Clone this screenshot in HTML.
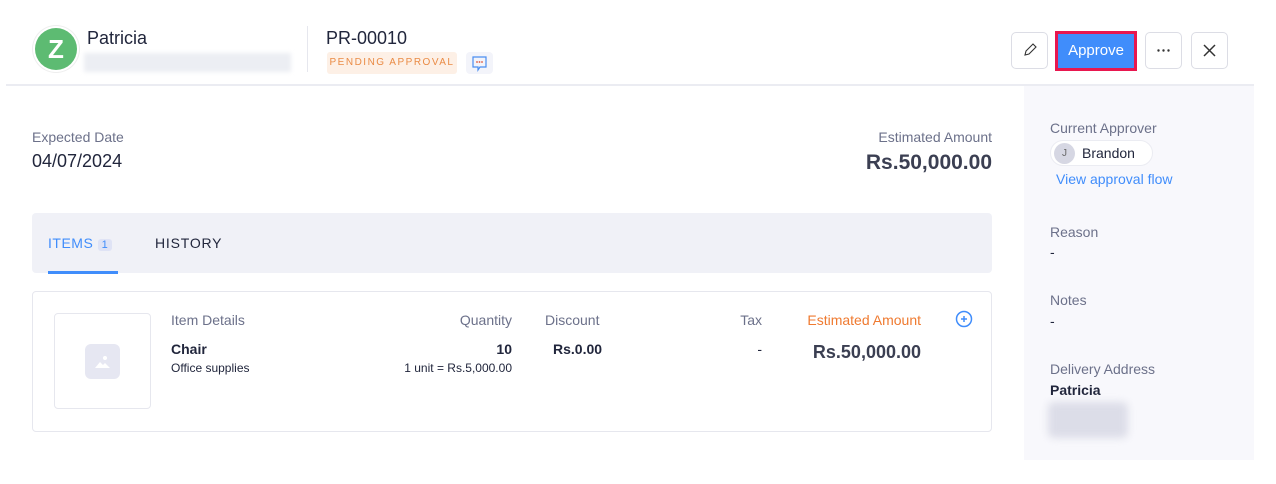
<!DOCTYPE html>
<html><head><style>
*{margin:0;padding:0;box-sizing:border-box}
body{width:1276px;height:484px;background:#fff;font-family:"Liberation Sans",sans-serif;color:#21263c;position:relative;overflow:hidden}
.a{position:absolute;white-space:nowrap}
.lbl{color:#6c718a;font-size:14px}
.btn{position:absolute;top:32px;width:37px;height:37px;border:1px solid #dcdde5;border-radius:5px;background:#fff}
</style></head><body>
<div class="a" style="left:33px;top:26px;width:46px;height:46px;border-radius:50%;background:#fff;box-shadow:0 0 0 1px #eee"></div>
<div class="a" style="left:35px;top:28px;width:42px;height:42px;border-radius:50%;background:#5dbb72;color:#fff;font-size:26px;font-weight:bold;text-align:center;line-height:42px">Z</div>
<div class="a" style="left:87px;top:28px;font-size:18px">Patricia</div>
<div class="a" style="left:84px;top:53px;width:207px;height:19px;background:#eceef3;filter:blur(2px)"></div>
<div class="a" style="left:307px;top:26px;width:1px;height:46px;background:#e6e7ee"></div>
<div class="a" style="left:326px;top:28px;font-size:18px">PR-00010</div>
<div class="a" style="left:327px;top:52px;width:130px;height:22px;background:#fdf0e6;border-radius:3px;color:#ea8b45;font-size:10px;letter-spacing:1.5px;text-align:center;line-height:22px">PENDING APPROVAL</div>
<div class="a" style="left:466px;top:52px;width:27px;height:22px;background:#f3f4fa;border-radius:4px"><svg width="27" height="22" viewBox="0 0 27 22"><path d="M7 5h13v10h-6l-2 3v-3H7z" fill="none" stroke="#4a8ef0" stroke-width="1.2"/><circle cx="11" cy="10" r=".9" fill="#e0553a"/><circle cx="13.5" cy="10" r=".9" fill="#e0553a"/><circle cx="16" cy="10" r=".9" fill="#e0553a"/></svg></div>
<div class="btn" style="left:1011px"><svg width="35" height="35"><path d="M13 22l1-4 7-7 3 3-7 7z" fill="none" stroke="#333" stroke-width="1.1"/></svg></div>
<div class="a" style="left:1055px;top:31px;width:82px;height:40px;background:#e8174f;padding:3px"><div style="width:100%;height:100%;background:#408dfb;color:#fff;font-size:15px;text-align:center;line-height:34px">Approve</div></div>
<div class="btn" style="left:1145px"><svg width="35" height="35"><circle cx="12.5" cy="17.5" r="1.2" fill="#333"/><circle cx="17.5" cy="17.5" r="1.2" fill="#333"/><circle cx="22.5" cy="17.5" r="1.2" fill="#333"/></svg></div>
<div class="btn" style="left:1191px"><svg width="35" height="35"><path d="M12 12l11 11M23 12L12 23" stroke="#333" stroke-width="1.5"/></svg></div>
<div class="a" style="left:6px;top:84px;width:1248px;height:2px;background:#ebecf2"></div>
<div class="a" style="left:1024px;top:86px;width:230px;height:374px;background:#f8f8fc"></div>
<div class="a lbl" style="left:1050px;top:120px">Current Approver</div>
<div class="a" style="left:1050px;top:140px;width:103px;height:26px;border-radius:13px;background:#fff;border:1px solid #ebecf2"></div>
<div class="a" style="left:1054px;top:143px;width:21px;height:21px;border-radius:50%;background:#d6d7e3;color:#666;font-size:10px;text-align:center;line-height:21px">J</div>
<div class="a" style="left:1082px;top:145px;font-size:14px">Brandon</div>
<div class="a" style="left:1056px;top:171px;font-size:14px;color:#408dfb">View approval flow</div>
<div class="a lbl" style="left:1050px;top:224px">Reason</div>
<div class="a" style="left:1050px;top:244px;font-size:14px">-</div>
<div class="a lbl" style="left:1050px;top:292px">Notes</div>
<div class="a" style="left:1050px;top:313px;font-size:14px">-</div>
<div class="a lbl" style="left:1050px;top:361px">Delivery Address</div>
<div class="a" style="left:1050px;top:382px;font-size:14px;font-weight:bold">Patricia</div>
<div class="a" style="left:1048px;top:402px;width:80px;height:36px;background:#dcdde8;filter:blur(4px);border-radius:6px"></div>
<div class="a lbl" style="left:32px;top:129px">Expected Date</div>
<div class="a" style="left:32px;top:151px;font-size:18px">04/07/2024</div>
<div class="a lbl" style="right:284px;top:129px">Estimated Amount</div>
<div class="a" style="right:284px;top:151px;font-size:21px;font-weight:bold;color:#3b3f52">Rs.50,000.00</div>
<div class="a" style="left:32px;top:213px;width:960px;height:60px;background:#f0f1f7;border-radius:4px"></div>
<div class="a" style="left:48px;top:235px;font-size:14px;color:#408dfb;letter-spacing:.5px">ITEMS <span style="display:inline-block;background:#dfe3f5;color:#408dfb;font-size:11px;padding:0 4px;border-radius:3px">1</span></div>
<div class="a" style="left:48px;top:271px;width:70px;height:3px;background:#408dfb"></div>
<div class="a" style="left:155px;top:235px;font-size:14px;letter-spacing:.8px">HISTORY</div>
<div class="a" style="left:32px;top:291px;width:960px;height:141px;border:1px solid #e6e7ee;border-radius:4px"></div>
<div class="a" style="left:54px;top:313px;width:97px;height:96px;border:1px solid #e6e7ee;border-radius:4px"></div>
<div class="a" style="left:85px;top:344px;width:35px;height:35px;background:#e6e7f2;border-radius:6px"><svg width="35" height="35"><path d="M10 24l5-6 3 3 2-2 5 5z" fill="#fff"/><circle cx="20" cy="14" r="2" fill="#fff"/></svg></div>
<div class="a lbl" style="left:171px;top:312px">Item Details</div>
<div class="a" style="left:171px;top:341px;font-size:14px;font-weight:bold">Chair</div>
<div class="a" style="left:171px;top:361px;font-size:12px">Office supplies</div>
<div class="a lbl" style="right:764px;top:312px">Quantity</div>
<div class="a" style="right:764px;top:341px;font-size:14px;font-weight:bold">10</div>
<div class="a" style="right:764px;top:361px;font-size:12px">1 unit = Rs.5,000.00</div>
<div class="a lbl" style="left:545px;top:312px">Discount</div>
<div class="a" style="left:553px;top:341px;font-size:14px;font-weight:bold">Rs.0.00</div>
<div class="a lbl" style="right:514px;top:312px">Tax</div>
<div class="a" style="right:514px;top:341px;font-size:14px">-</div>
<div class="a" style="right:355px;top:312px;font-size:14px;color:#ef7a30">Estimated Amount</div>
<div class="a" style="right:355px;top:342px;font-size:18px;font-weight:bold;color:#3b3f52">Rs.50,000.00</div>
<div class="a" style="left:954px;top:310px"><svg width="20" height="20"><circle cx="10" cy="9" r="7.5" fill="none" stroke="#408dfb" stroke-width="1.5"/><path d="M10 6v6M7 9h6" stroke="#408dfb" stroke-width="1.5"/></svg></div>
</body></html>
